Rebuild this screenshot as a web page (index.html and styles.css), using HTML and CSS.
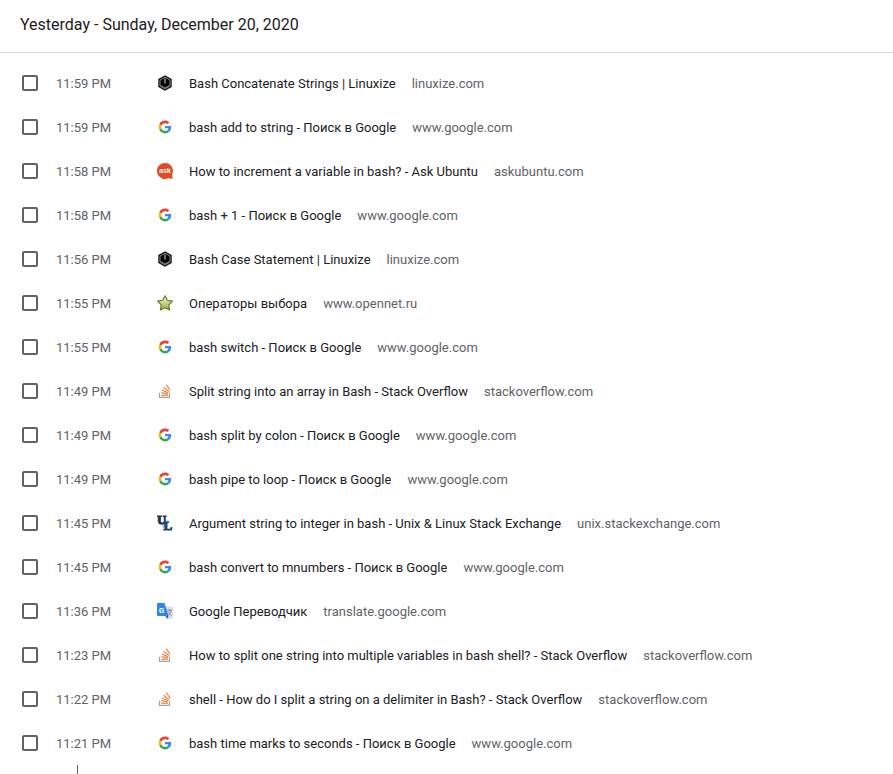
FILE: index.html
```
<!DOCTYPE html>
<html lang="en">
<head>
<meta charset="utf-8">
<title>History</title>
<link rel="stylesheet" href="styles.css">
</head>
<body>
<svg class="sprite" aria-hidden="true">
  <defs>
    <linearGradient id="star-fill" x1="0" y1="0" x2="0" y2="1">
      <stop offset="0" stop-color="#f8fad8"/>
      <stop offset="1" stop-color="#9aa63c"/>
    </linearGradient>
    <symbol id="linuxize" viewBox="0 0 16 16">
      <path d="M8 0.3 14.7 4.1V11.9L8 15.7 1.3 11.9V4.1Z" fill="#111"/>
      <path d="M8 2.2 13 5.1V10.9L8 13.8 3 10.9V5.1Z" fill="#000" stroke="#a8a8a8" stroke-width=".8"/>
      <path d="M8 3.5V8.500" stroke="#ddd" stroke-width="1"/>
      <path d="M3.6 10.4 8 12.9 12.4 10.4" fill="none" stroke="#999" stroke-width=".8"/>
    </symbol>
    <symbol id="google" viewBox="-6 -6 60 60">
      <path fill="#EA4335" d="M24 9.5c3.54 0 6.71 1.22 9.21 3.6l6.85-6.85C35.9 2.38 30.47 0 24 0 14.62 0 6.51 5.38 2.56 13.22l7.98 6.19C12.43 13.72 17.74 9.5 24 9.5z"/>
      <path fill="#4285F4" d="M46.98 24.55c0-1.57-.15-3.09-.38-4.55H24v9.02h12.94c-.58 2.96-2.26 5.48-4.78 7.18l7.73 6c4.51-4.18 7.09-10.36 7.09-17.65z"/>
      <path fill="#FBBC05" d="M10.53 28.59c-.48-1.45-.76-2.99-.76-4.59s.27-3.14.76-4.59l-7.98-6.19C.92 16.46 0 20.12 0 24c0 3.88.92 7.54 2.56 10.78l7.97-6.19z"/>
      <path fill="#34A853" d="M24 48c6.48 0 11.93-2.13 15.89-5.81l-7.73-6c-2.15 1.45-4.92 2.3-8.16 2.3-6.26 0-11.57-4.22-13.47-9.91l-7.98 6.19C6.51 42.62 14.62 48 24 48z"/>
    </symbol>
    <symbol id="askubuntu" viewBox="0 0 16 16">
      <path d="M8 0a8 8 0 1 0 3.6 15.1L15.6 16 15 11.900A8 8 0 0 0 8 0Z" fill="#e9481f"/>
      <text class="ask-letters" x="8" y="10.400">ask</text>
    </symbol>
    <symbol id="opennet" viewBox="0 0 16 16">
      <path d="M8 .8 10.300 5.300 15.400 6.100 11.800 9.800 12.600 15 8 12.700 3.400 15 4.200 9.800 .6 6.100 5.700 5.300Z" fill="url(#star-fill)" stroke="#69701f" stroke-width="1.100" stroke-linejoin="round"/>
    </symbol>
    <symbol id="stackoverflow" viewBox="0 0 16 16">
      <path d="M2.500 9.800V14.400H12.500V9.800" fill="none" stroke="#a2a4a8" stroke-width="1.200"/>
      <g fill="none" stroke="#ee8540" stroke-width="1.200">
        <path d="M4.200 12.300H10.900"/>
        <path d="M4.300 9.700 10.900 11.100"/>
        <path d="M5 7 11.200 9.900"/>
        <path d="M6.700 4.300 11.900 8.700"/>
        <path d="M9.300 1.500 13.100 7.300"/>
      </g>
    </symbol>
    <symbol id="unix" viewBox="0 0 16 16">
      <path d="M5.500 12 12 5.500" stroke="#b4d3e2" stroke-width="3"/>
      <text class="unix-letter unix-back" x="0" y="9">U</text>
      <text class="unix-letter unix-front" x="6.500" y="15.300">L</text>
    </symbol>
    <symbol id="translate" viewBox="0 0 16 16">
      <path d="M6 3.500H15Q16 3.500 16 4.500V15Q16 16 15 16H10Z" fill="#dcdfe3"/>
      <path d="M8.500 13H11.500L10 16Z" fill="#2459b5"/>
      <path d="M1 0H7.500L11.600 13H1Q0 13 0 12V1Q0 0 1 0Z" fill="#2f86ee"/>
      <text class="translate-letter" x="4.600" y="9.500">G</text>
      <path d="M10 7.300H15M12.500 6V7.300M14.200 7.500Q13.300 10.500 11.500 12M11.200 8.700Q12.500 11 14.600 12.500" fill="none" stroke="#7c858d" stroke-width=".9"/>
    </symbol>
  </defs>
</svg>
<main class="history">
  <h1 class="day">Yesterday - Sunday, December 20, 2020</h1>
  <ul class="visits">
    <li class="visit"><label class="pick"><input type="checkbox"><time>11:59 PM</time></label><svg class="icon"><use href="#linuxize"/></svg><a class="title" href="#">Bash Concatenate Strings | Linuxize</a><span class="domain">linuxize.com</span></li>
    <li class="visit"><label class="pick"><input type="checkbox"><time>11:59 PM</time></label><svg class="icon"><use href="#google"/></svg><a class="title" href="#">bash add to string - Поиск в Google</a><span class="domain">www.google.com</span></li>
    <li class="visit"><label class="pick"><input type="checkbox"><time>11:58 PM</time></label><svg class="icon"><use href="#askubuntu"/></svg><a class="title" href="#">How to increment a variable in bash? - Ask Ubuntu</a><span class="domain">askubuntu.com</span></li>
    <li class="visit"><label class="pick"><input type="checkbox"><time>11:58 PM</time></label><svg class="icon"><use href="#google"/></svg><a class="title" href="#">bash + 1 - Поиск в Google</a><span class="domain">www.google.com</span></li>
    <li class="visit"><label class="pick"><input type="checkbox"><time>11:56 PM</time></label><svg class="icon"><use href="#linuxize"/></svg><a class="title" href="#">Bash Case Statement | Linuxize</a><span class="domain">linuxize.com</span></li>
    <li class="visit"><label class="pick"><input type="checkbox"><time>11:55 PM</time></label><svg class="icon"><use href="#opennet"/></svg><a class="title" href="#">Операторы выбора</a><span class="domain">www.opennet.ru</span></li>
    <li class="visit"><label class="pick"><input type="checkbox"><time>11:55 PM</time></label><svg class="icon"><use href="#google"/></svg><a class="title" href="#">bash switch - Поиск в Google</a><span class="domain">www.google.com</span></li>
    <li class="visit"><label class="pick"><input type="checkbox"><time>11:49 PM</time></label><svg class="icon"><use href="#stackoverflow"/></svg><a class="title" href="#">Split string into an array in Bash - Stack Overflow</a><span class="domain">stackoverflow.com</span></li>
    <li class="visit"><label class="pick"><input type="checkbox"><time>11:49 PM</time></label><svg class="icon"><use href="#google"/></svg><a class="title" href="#">bash split by colon - Поиск в Google</a><span class="domain">www.google.com</span></li>
    <li class="visit"><label class="pick"><input type="checkbox"><time>11:49 PM</time></label><svg class="icon"><use href="#google"/></svg><a class="title" href="#">bash pipe to loop - Поиск в Google</a><span class="domain">www.google.com</span></li>
    <li class="visit"><label class="pick"><input type="checkbox"><time>11:45 PM</time></label><svg class="icon"><use href="#unix"/></svg><a class="title" href="#">Argument string to integer in bash - Unix &amp; Linux Stack Exchange</a><span class="domain">unix.stackexchange.com</span></li>
    <li class="visit"><label class="pick"><input type="checkbox"><time>11:45 PM</time></label><svg class="icon"><use href="#google"/></svg><a class="title" href="#">bash convert to mnumbers - Поиск в Google</a><span class="domain">www.google.com</span></li>
    <li class="visit"><label class="pick"><input type="checkbox"><time>11:36 PM</time></label><svg class="icon"><use href="#translate"/></svg><a class="title" href="#">Google Переводчик</a><span class="domain">translate.google.com</span></li>
    <li class="visit"><label class="pick"><input type="checkbox"><time>11:23 PM</time></label><svg class="icon"><use href="#stackoverflow"/></svg><a class="title" href="#">How to split one string into multiple variables in bash shell? - Stack Overflow</a><span class="domain">stackoverflow.com</span></li>
    <li class="visit"><label class="pick"><input type="checkbox"><time>11:22 PM</time></label><svg class="icon"><use href="#stackoverflow"/></svg><a class="title" href="#">shell - How do I split a string on a delimiter in Bash? - Stack Overflow</a><span class="domain">stackoverflow.com</span></li>
    <li class="visit"><label class="pick"><input type="checkbox"><time>11:21 PM</time></label><svg class="icon"><use href="#google"/></svg><a class="title" href="#">bash time marks to seconds - Поиск в Google</a><span class="domain">www.google.com</span></li>
  </ul>
  <div class="gap-mark"></div>
</main>
</body>
</html>
```
FILE: styles.css
```
* {
  box-sizing: border-box;
}

body {
  margin: 0;
  background: #fff;
  color: #202124;
  font: 13px/21px Roboto, "Noto Sans", sans-serif;
}

.sprite {
  position: absolute;
  width: 0;
  height: 0;
}

.day {
  margin: 0;
  padding: 13px 20px 15px;
  border-bottom: 1px solid #d8d8d8;
  font-size: 16px;
  font-weight: 400;
  line-height: 24px;
}

.visits {
  margin: 0;
  padding: 8px 20px 0;
  list-style: none;
}

.visit {
  display: flex;
  align-items: center;
  height: 44px;
  white-space: nowrap;
}

.pick {
  display: flex;
  align-items: center;
  flex: none;
  width: 137px;
  padding-left: 2px;
  gap: 18px;
  color: #5f6368;
}

.pick input {
  appearance: none;
  flex: none;
  width: 16px;
  height: 16px;
  margin: 0;
  border: 2px solid #5f6368;
  border-radius: 2px;
}

.pick input:checked {
  background: #1a73e8;
  border-color: #1a73e8;
}

.icon {
  flex: none;
  width: 16px;
  height: 16px;
  margin-right: 16px;
}

.title {
  overflow: hidden;
  color: inherit;
  text-decoration: none;
  text-overflow: ellipsis;
}

.domain {
  flex: none;
  margin-left: 16px;
  color: #5f6368;
}

.gap-mark {
  width: 1px;
  height: 9px;
  margin-left: 77px;
  background: #5f6368;
}

.ask-letters {
  fill: #fff;
  font: 700 7px "Open Sans", sans-serif;
  text-anchor: middle;
}

.unix-letter {
  font: 700 13px "Liberation Serif", serif;
  stroke-width: 1px;
}

.unix-back {
  fill: #1d3350;
  stroke: #1d3350;
}

.unix-front {
  fill: #24466b;
  stroke: #24466b;
}

.translate-letter {
  fill: #fff;
  font: 700 8px Roboto, sans-serif;
  text-anchor: middle;
}
```
